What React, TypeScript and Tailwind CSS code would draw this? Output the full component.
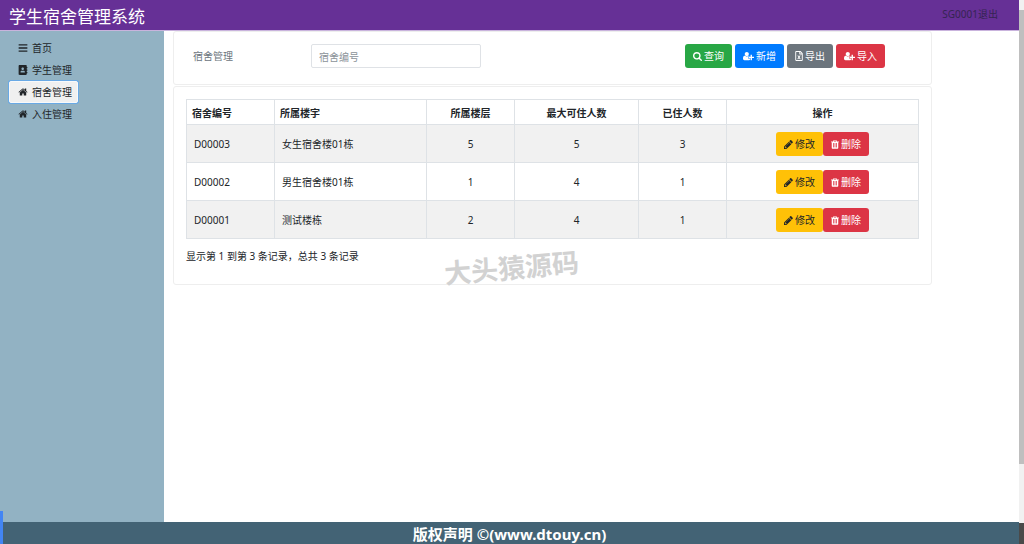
import type { ReactNode } from "react";
import { FaAddressBook, FaBars, FaRegFileExcel } from "react-icons/fa";

const PATHS = {
  search:
    "M1216 832q0-185-131.5-316.5t-316.5-131.5-316.5 131.5-131.5 316.5 131.5 316.5 316.5 131.5 316.5-131.5 131.5-316.5zm512 832q0 52-38 90t-90 38q-54 0-90-38l-343-342q-179 124-399 124-143 0-273.5-55.5t-225-150-150-225-55.5-273.5 55.5-273.5 150-225 225-150 273.5-55.5 273.5 55.5 225 150 150 225 55.5 273.5q0 220-124 399l343 343q37 37 37 90z",
  home:
    "M1472 992v480q0 26-19 45t-45 19h-384v-384h-256v384h-384q-26 0-45-19t-19-45v-480q0-1 .5-3t.5-3l575-474 575 474q1 2 1 6zm223-69l-62 74q-8 9-21 11h-3q-13 0-21-7l-692-577-692 577q-12 8-24 7-13-2-21-11l-62-74q-8-10-7-23.5t11-21.5l719-599q32-26 76-26t76 26l244 204v-195q0-14 9-23t23-9h192q14 0 23 9t9 23v408l219 182q10 8 11 21.5t-7 23.5z",
  pencil:
    "M491 1536l91-91-235-235-91 91v107h128v128h107zm523-928q0-22-22-22-10 0-17 7l-542 542q-7 7-7 17 0 22 22 22 10 0 17-7l542-542q7-7 7-17zm-54-192l416 416-832 832h-416v-416zm683 96q0 53-37 90l-166 166-416-416 166-165q36-38 90-38 53 0 91 38l235 234q37 39 37 91z",
  trash:
    "M704 1376v-704q0-14-9-23t-23-9h-64q-14 0-23 9t-9 23v704q0 14 9 23t23 9h64q14 0 23-9t9-23zm256 0v-704q0-14-9-23t-23-9h-64q-14 0-23 9t-9 23v704q0 14 9 23t23 9h64q14 0 23-9t9-23zm256 0v-704q0-14-9-23t-23-9h-64q-14 0-23 9t-9 23v704q0 14 9 23t23 9h64q14 0 23-9t9-23zm-544-992h448l-48-117q-7-9-17-11h-317q-10 2-17 11zm928 32v64q0 14-9 23t-23 9h-96v948q0 83-47 143.5t-113 60.5h-832q-66 0-113-58.5t-47-141.5v-952h-96q-14 0-23-9t-9-23v-64q0-14 9-23t23-9h309l70-167q15-37 54-63t79-26h320q40 0 79 26t54 63l70 167h309q14 0 23 9t9 23z",
  userPlus:
    "M704 896q-159 0-271.5-112.5t-112.5-271.5 112.5-271.5 271.5-112.5 271.5 112.5 112.5 271.5-112.5 271.5-271.5 112.5zm960 128h352q13 0 22.5 9.5t9.5 22.5v192q0 13-9.5 22.5t-22.5 9.5h-352v352q0 13-9.5 22.5t-22.5 9.5h-192q-13 0-22.5-9.5t-9.5-22.5v-352h-352q-13 0-22.5-9.5t-9.5-22.5v-192q0-13 9.5-22.5t22.5-9.5h352v-352q0-13 9.5-22.5t22.5-9.5h192q13 0 22.5 9.5t9.5 22.5v352zm-736 224q0 52 38 90t90 38h256v238q-68 50-171 50h-874q-121 0-194-69t-73-190q0-53 3.5-103.5t14-109 26.5-108.5 43-97.5 62-81 85.5-53.5 111.5-20q19 0 39 17 79 61 154.5 91.5t164.5 30.5 164.5-30.5 154.5-91.5q20-17 39-17 132 0 217 96h-223q-52 0-90 38t-38 90v192z",
};

// each glyph is cropped to its own advance width
const SHAPES = {
  search: { viewBox: "64 128 1664 1664", className: "size-[9px]" },
  home: { viewBox: "0 0 1792 1792", className: "size-[10px]" },
  pencil: { viewBox: "128 128 1536 1536", className: "size-[9px]" },
  trash: { viewBox: "192 128 1408 1536", className: "h-[9px] w-[8px]" },
  userPlus: { viewBox: "0 0 2048 1792", className: "h-[10px] w-[11px]" },
};

function Icon({ name }: { name: keyof typeof PATHS }) {
  const { viewBox, className } = SHAPES[name];
  return (
    <svg viewBox={viewBox} className={className} fill="currentColor" aria-hidden="true">
      <path d={PATHS[name]} />
    </svg>
  );
}

const menu = [
  { label: "首页", icon: <FaBars className="size-[10px]" /> },
  { label: "学生管理", icon: <FaAddressBook className="size-[10px]" /> },
  { label: "宿舍管理", icon: <Icon name="home" />, active: true },
  { label: "入住管理", icon: <Icon name="home" /> },
];

const rooms = [
  { id: "D00003", building: "女生宿舍楼01栋", floor: 5, max: 5, used: 3 },
  { id: "D00002", building: "男生宿舍楼01栋", floor: 1, max: 4, used: 1 },
  { id: "D00001", building: "测试楼栋", floor: 2, max: 4, used: 1 },
];

function Button({ color, children }: { color: string; children: ReactNode }) {
  return (
    <button type="button" className={`inline-flex h-6 items-center gap-[2px] rounded-[3px] px-2 ${color}`}>
      {children}
    </button>
  );
}

export default function App() {
  return (
    <div className="relative flex min-h-screen bg-white font-['Noto_Sans','Noto_Sans_CJK_SC',sans-serif] text-[10px] leading-[15px] text-[#212529]">
      <div className="flex min-w-0 flex-1 flex-col">
        <header className="flex h-[31px] items-center justify-between border-b border-[#c9b3dd] bg-[#663096] pr-[21px] pl-[9px]">
          <h1 className="pt-1 text-[17px] leading-[24px] text-white">学生宿舍管理系统</h1>
          <a href="#logout" className="pb-[2px] text-[#352452]">SG0001退出</a>
        </header>

        <div className="flex flex-1">
          <nav className="flex w-[164px] shrink-0 flex-col items-start bg-[#92b2c3] pt-[6px] pl-[9px]">
            {menu.map((item) => (
              <a
                key={item.label}
                href="#"
                className={
                  item.active
                    ? "flex h-[22px] items-center gap-1 rounded-[2px] border border-[#f8f9fa] bg-[#f0f0f0] pr-[5px] pl-2 ring-1 ring-[#69a9e5]"
                    : "flex h-[22px] items-center gap-1 border border-transparent px-2"
                }
              >
                {item.icon}
                {item.label}
              </a>
            ))}
          </nav>

          <main className="min-w-0 flex-1 pr-[87px] pl-[9px]">
            <form className="flex h-[54px] items-start rounded-[3px] border border-[#eeeeee] px-[19px] pt-3">
              <label htmlFor="roomNo" className="w-[118px] shrink-0 pt-[5px] text-[#6c757d]">宿舍管理</label>
              <input
                id="roomNo"
                placeholder="宿舍编号"
                className="h-6 w-[170px] rounded-[2px] border border-[#dfe2e6] px-[7px] pt-px placeholder:text-[#8b9299]"
              />
              <div className="mr-[27px] ml-auto flex gap-[3px] text-white">
                <Button color="bg-[#28a745]"><Icon name="search" />查询</Button>
                <Button color="bg-[#007bff]"><Icon name="userPlus" />新增</Button>
                <Button color="bg-[#6c757d]"><FaRegFileExcel className="h-[10px] w-[8px]" />导出</Button>
                <Button color="bg-[#dc3545]"><Icon name="userPlus" />导入</Button>
              </div>
            </form>

            <section className="relative mt-px rounded-[3px] border border-[#eeeeee] px-3 pt-3 pb-[20px]">
              <table className="w-full table-fixed border-collapse border border-[#d3d6d9] text-center">
                <colgroup>
                  <col className="w-[88px]" />
                  <col className="w-[152px]" />
                  <col className="w-[88px]" />
                  <col className="w-[124px]" />
                  <col className="w-[88px]" />
                  <col />
                </colgroup>
                <thead>
                  <tr className="h-[25px] *:border *:border-[#dee2e6] *:px-[5px] *:pt-[2px] *:font-bold">
                    <th className="text-left">宿舍编号</th>
                    <th className="text-left">所属楼宇</th>
                    <th>所属楼层</th>
                    <th>最大可住人数</th>
                    <th>已住人数</th>
                    <th>操作</th>
                  </tr>
                </thead>
                <tbody>
                  {rooms.map((room) => (
                    <tr key={room.id} className="h-[38px] odd:bg-[#f1f1f1] *:border *:border-[#dee2e6] *:px-[7px] *:pt-px">
                      <td className="text-left">{room.id}</td>
                      <td className="text-left">{room.building}</td>
                      <td>{room.floor}</td>
                      <td>{room.max}</td>
                      <td>{room.used}</td>
                      <td>
                        <div className="flex justify-center">
                          <Button color="bg-[#ffc107] text-[#212529]"><Icon name="pencil" />修改</Button>
                          <Button color="bg-[#dc3545] text-white"><Icon name="trash" />删除</Button>
                        </div>
                      </td>
                    </tr>
                  ))}
                </tbody>
              </table>
              <p className="mt-[10px]">显示第 1 到第 3 条记录，总共 3 条记录</p>
              <div className="pointer-events-none absolute bottom-0 left-[270px] -rotate-5 text-[27px] leading-[32px] font-bold text-[#d2d2d2]">
                大头猿源码
              </div>
            </section>
          </main>
        </div>

        <footer className="h-[22px] bg-[#436375] text-center text-[15px] leading-[25px] font-bold text-white">
          版权声明 ©(www.dtouy.cn)
        </footer>
      </div>

      {/* scroll track */}
      <div className="flex w-[5px] shrink-0 flex-col bg-[#f1f1f1] pt-[10px]">
        <div className="basis-[85%] bg-[#bfbfbf]" />
        <div className="mt-auto h-[21px] bg-[#4a4a4a]" />
      </div>
      <div className="absolute bottom-0 left-0 h-[33px] w-[3px] bg-[#4285f4]" />
    </div>
  );
}
